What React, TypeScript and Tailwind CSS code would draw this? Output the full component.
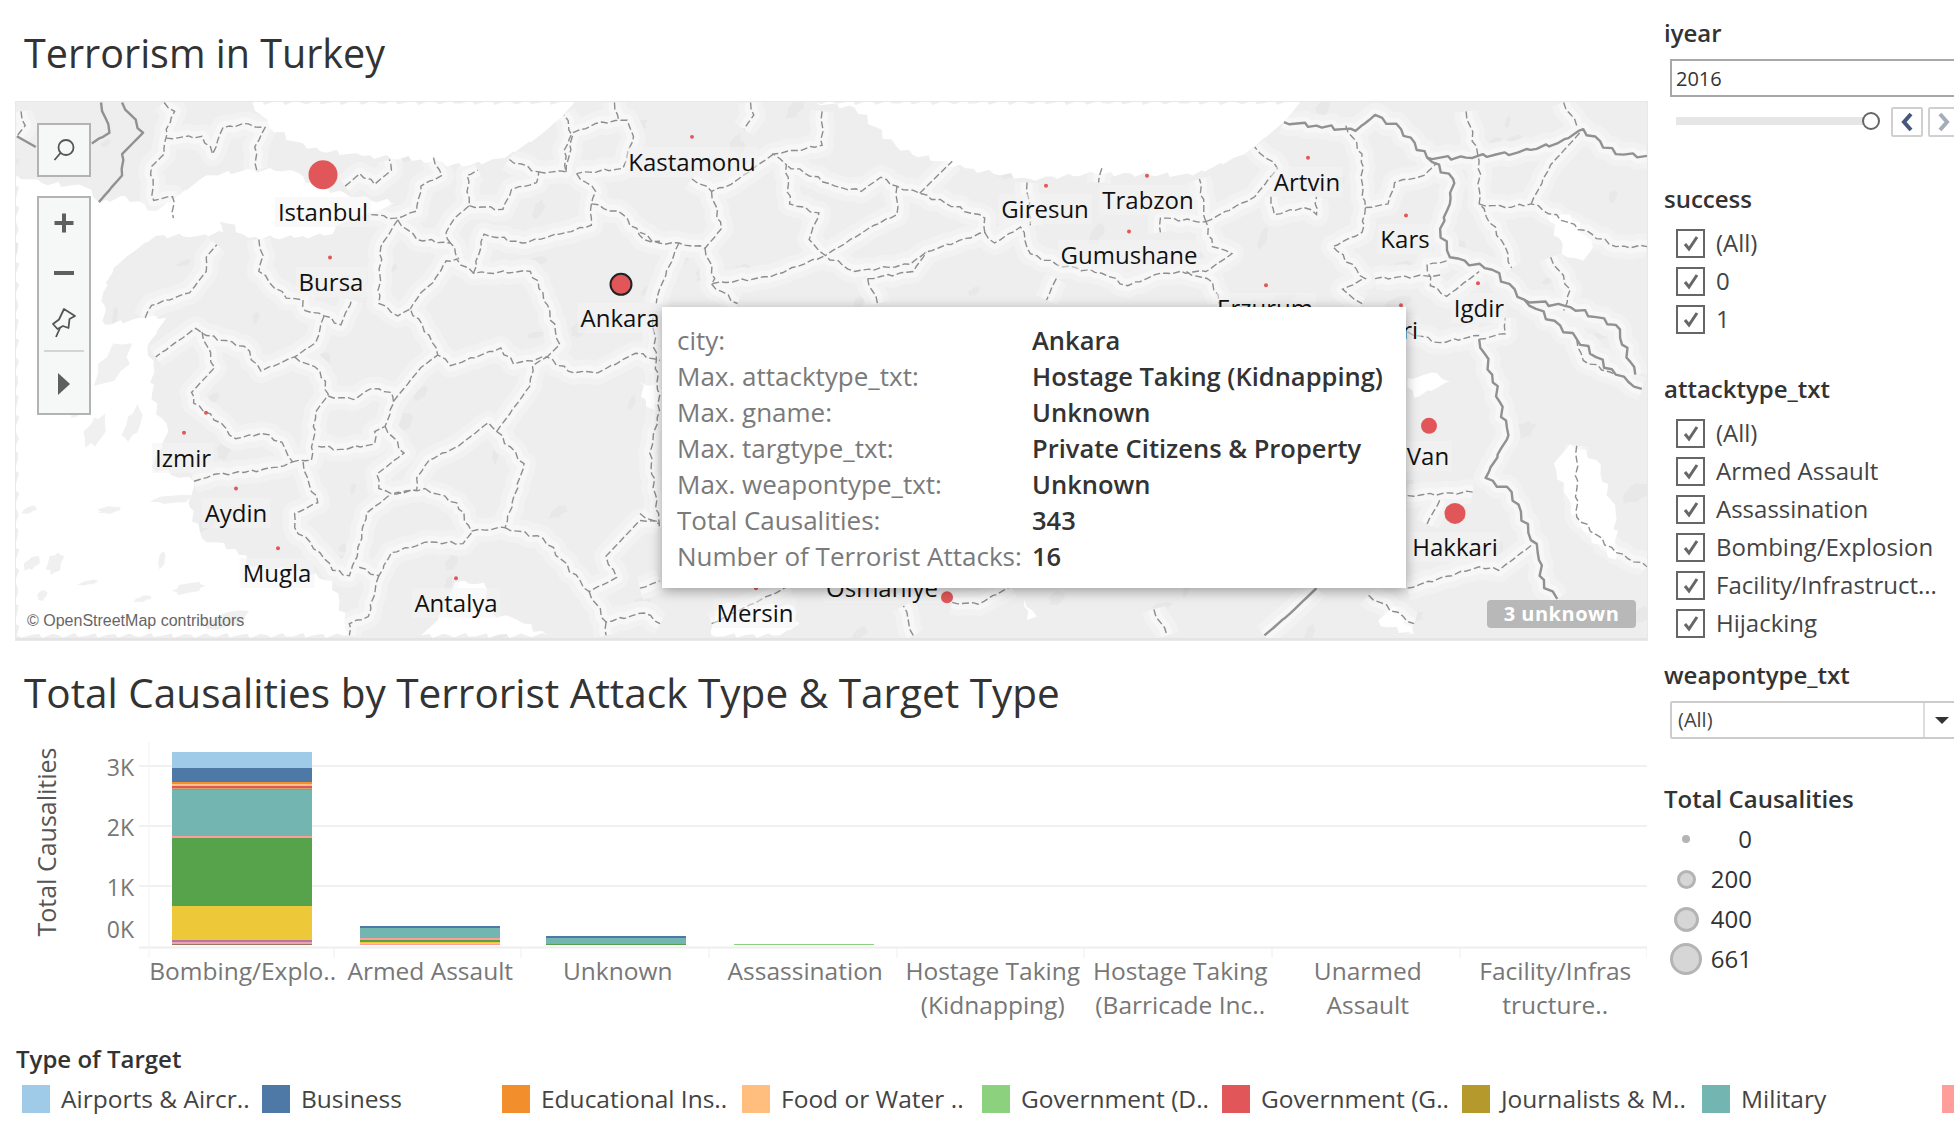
const font = "font-['Open_Sans',sans-serif]";

// map traces: coordinates from the two crops of the map
const westLines = [
  "390,35 415,60 395,110 390,180 360,215 365,310 410,300 412,360",
  "395,135 480,130 505,180 530,105 590,95 630,105 605,160 610,225",
  "1030,190 1050,240 1000,270 990,340 940,360 880,350",
  "820,270 855,235 890,265 930,225 925,195",
  "945,365 905,440 900,600 945,635 975,615 1020,690 1040,745 1070,775 1190,725 1220,770 1300,750 1330,715 1290,570 1260,510 1125,515 1085,475 1060,480 1030,540 1000,570 975,615",
  "945,365 990,420 1070,430 1090,475",
  "1070,430 1060,400 1080,360 1115,325 1110,240 1135,225",
  "1115,325 1195,335 1215,280 1275,260 1280,230 1210,195",
  "1280,230 1345,230 1340,170 1360,120 1430,90 1490,85 1505,130 1480,220 1370,235",
  "1345,230 1360,130 1340,70",
  "1460,35 1470,85",
  "1370,235 1415,285 1405,320 1480,350 1530,420 1568,425",
  "1405,320 1405,380 1330,405 1240,430 1150,405 1125,515",
  "615,420 625,465 615,510 680,585 720,590 725,620 770,635 810,660 835,590",
  "770,635 750,710 700,750 620,790 580,720 490,690 465,670 370,750",
  "480,680 510,780 455,850 460,880 500,910 560,980 620,965 670,990 695,1045 660,1060 580,1075 510,1080 460,1100",
  "700,750 760,790 780,855 750,905 745,980 740,1040 695,1045",
  "780,860 840,870 880,840 930,850 935,880 915,945 890,960 890,995 810,1010 750,1000",
  "935,875 1000,780 1040,745",
  "915,945 960,1020 895,1080 900,1120 930,1135 1010,1120",
  "720,1045 735,1110 755,1160 700,1190 700,1230 760,1300 790,1350 830,1365 850,1300 870,1190 930,1135",
  "1010,1120 1085,1160 1120,1240 1200,1230 1245,1050 1180,960 1160,935 1090,1000 1020,1040 990,1090 990,1125 930,1135",
  "1200,1230 1290,1260 1400,1410 1465,1370 1440,1310 1520,1210 1568,1215",
  "1120,1245 1100,1275 1020,1270 930,1300 900,1365 850,1340",
  "1180,960 1260,830 1265,775 1300,750 1350,790 1420,795 1510,740 1568,760",
  "1400,1410 1440,1495 1530,1470 1568,1500",
  "1440,1495 1440,1533",
  "900,1365 875,1480 830,1500 830,1533",
  "345,640 360,605 450,570 490,510 490,470 515,435",
  "50,60 60,100 40,130",
];

const eastLines = [
  "170,35 175,70 160,110",
  "280,60 280,155 240,170 205,180 225,210 230,320 275,345 260,420 285,465 330,510 415,490 440,455 530,400 530,360 430,290 395,270 370,245 340,285 300,270 225,210",
  "205,180 140,265 110,285 80,250",
  "110,285 125,390 100,445 60,430 30,430 0,400",
  "100,445 115,530 110,545 200,525 285,465",
  "60,430 30,560 25,600",
  "110,545 150,600",
  "350,530 365,600",
  "350,530 420,510 440,455",
  "395,270 395,350 360,380 285,465",
  "530,400 545,430 585,385 600,460 640,490 710,515 750,550 800,515 870,510 910,460 880,440 870,370 800,360 800,400",
  "870,370 945,300 980,220 945,160",
  "870,370 860,250",
  "430,290 480,200",
  "595,260 600,380",
  "710,220 705,260",
  "970,300 975,350 1020,330 1040,350 1040,300",
  "640,530 625,590",
  "840,510 880,540 890,600",
  "1085,100 1110,180 1110,300 1115,330 1110,400 1065,440 1115,530 1080,560 1110,600",
  "1115,330 1150,320 1160,260 1205,240 1225,205",
  "1230,520 1130,530",
  "1240,480 1210,490 1215,550 1240,580 1290,510",
  "1290,700 1330,685 1330,640",
  "1180,680 1230,710 1290,690",
  "1180,1140 1280,1130",
  "1210,1220 1230,1150",
  "1180,1400 1290,1340 1320,1350 1370,1280",
  "1270,60 1290,200 1290,320 1330,440 1340,500",
  "1290,320 1330,330 1370,320 1500,440 1548,440",
  "1370,320 1400,210 1450,110",
  "1420,35 1440,100",
  "1400,470 1430,560 1420,620",
  "1440,700 1450,760 1500,800",
  "1440,1000 1440,1200 1500,1300 1548,1340",
  "110,1500 200,1420 230,1395",
  "790,1460 810,1533",
  "1120,1420 1190,1500",
  "480,1440 520,1445 570,1395",
  "420,1533 405,1450",
  "0,1190 30,1220",
  "20,640 30,900 15,1020 30,1230",
  "0,1400 30,1380",
];

const countryLines = [
  "990,90 1040,100 1100,115 1130,70 1170,110 1210,190 1250,250 1245,320 1230,390 1245,470 1310,505 1360,590 1440,700 1500,800 1540,840",
  "1210,190 1270,190 1350,175 1410,150 1450,110 1500,180 1548,185",
  "1290,700 1310,800 1335,970 1300,1090 1340,1130 1380,1300 1390,1400 1410,1430",
  "1360,590 1430,610 1500,660 1530,800",
  "1040,1400 1000,1470 960,1533",
];

// subdivide a trace and shake it a little so borders don't look ruled
function wiggle(points: string, sx: number, sy: number, amp = 1.4) {
  const pts = points.split(" ").map((p) => p.split(",").map(Number));
  let d = `M${pts[0][0]},${pts[0][1]}`;
  for (let i = 1; i < pts.length; i++) {
    const [x0, y0] = pts[i - 1];
    const [x1, y1] = pts[i];
    const len = Math.hypot((x1 - x0) * sx, (y1 - y0) * sy);
    const n = Math.max(1, Math.round(len / 7));
    for (let k = 1; k <= n; k++) {
      const t = k / n;
      const off = k === n ? 0 : Math.sin(k * 2.3 + i * 1.7) * amp;
      d += `L${(x0 + (x1 - x0) * t + off / sx).toFixed(1)},${(y0 + (y1 - y0) * t - off / sy).toFixed(1)}`;
    }
  }
  return d;
}

// lumpy outline for islands and the darker land patches
function blob(cx: number, cy: number, rx: number, ry: number, seed: number) {
  let d = "";
  for (let i = 0; i < 12; i++) {
    const a = (i / 12) * Math.PI * 2;
    const r = 0.72 + 0.28 * Math.sin(i * 2.1 + seed) * Math.cos(i * 0.9 + seed * 2) + 0.12;
    d += `${i ? "L" : "M"}${(cx + Math.cos(a + 0.5) * rx * r).toFixed(1)},${(cy + Math.sin(a) * ry * r).toFixed(1)}`;
  }
  return d + "Z";
}

const westSea = [
  "600,35 640,105 730,165 860,185 1000,195 1100,215 1200,190 1280,130 1340,70 1365,35 600,35",
  "40,240 100,262 200,272 235,315 300,300 370,340 420,300 490,240 600,225 690,225 760,275 820,290 880,310 950,315 880,345 800,380 790,405 700,415 590,415 540,375 510,350 530,400 470,410 370,410 310,460 270,500 245,570 250,660 345,640 395,640 350,720 365,760 360,870 400,960 360,1060 460,1100 450,1170 480,1260 560,1290 600,1340 700,1350 790,1380 830,1533 40,1533 40,240",
  "1000,1533 1040,1490 1080,1385 1150,1385 1170,1470 1230,1490 1300,1533 1000,1533",
  "1530,860 1568,815 1568,905 1530,860",
];

const westIslands = [
  [270, 770, 50, 65], [315, 940, 24, 55], [225, 960, 28, 55], [130, 1330, 22, 38], [260, 1180, 35, 12],
  [450, 1400, 50, 18], [340, 1430, 26, 10], [210, 1385, 26, 9], [75, 1330, 20, 25], [410, 1150, 55, 16],
  [100, 1420, 14, 18], [385, 1320, 12, 26], [70, 1180, 22, 12], [540, 1490, 60, 30], [180, 910, 12, 14],
];

const eastSea = [
  "270,35 330,50 400,170 500,220 600,250 700,235 850,240 930,180 990,90 1015,35 270,35",
  "1180,810 1225,795 1245,820 1190,865 1180,810",
  "1395,350 1430,350 1465,440 1450,480 1425,470 1395,350",
  "1405,1050 1430,995 1470,1040 1500,1190 1500,1320 1450,1240 1420,1130 1405,1050",
  "110,1533 115,1480 125,1445 235,1450 245,1500 215,1533 110,1533",
  "590,1430 610,1480 595,1490 590,1430",
  "0,820 25,830 25,900 10,890 0,820",
  "1135,1490 1160,1450 1175,1500 1190,1530 1150,1510 1135,1490",
];

// scattered land texture, fixed from the index so every run draws the same
const texture = Array.from({ length: 130 }, (_, i) => {
  const x = 16 + ((i * 487.3 + Math.sin(i) * 90) % 1631);
  const y = 102 + ((i * 211.7 + Math.cos(i * 1.3) * 60) % 538);
  const rx = 4 + ((i * 7) % 11);
  const ry = 4 + ((i * 5) % 9);
  return blob(x, y, rx, ry, i);
});

function MapDrawing() {
  const west = "translate(0,90) scale(0.4209,0.3571)";
  const east = "translate(640,90) scale(0.6505,0.3571)";
  const wPaths = westLines.map((l) => wiggle(l, 0.4209, 0.3571));
  const ePaths = eastLines.map((l) => wiggle(l, 0.6505, 0.3571));
  const cPaths = countryLines.map((l) => wiggle(l, 0.6505, 0.3571, 2));
  const halo = (
    <>
      <g transform={west}>{wPaths.map((d, i) => <path key={i} d={d} vectorEffect="non-scaling-stroke" />)}</g>
      <g transform={east}>{ePaths.map((d, i) => <path key={i} d={d} vectorEffect="non-scaling-stroke" />)}</g>
      <g transform={east}>{cPaths.map((d, i) => <path key={i} d={d} vectorEffect="non-scaling-stroke" />)}</g>
    </>
  );
  return (
    <svg viewBox="16 102 1631 538" className="absolute inset-0 h-full w-full" preserveAspectRatio="none">
      <rect x="16" y="102" width="1631" height="538" fill="#eeeeee" />
      <g fill="#e8e8e8">
        {texture.map((d, i) => <path key={i} d={d} />)}
      </g>
      <g fill="none" stroke="#f2f2f2" strokeWidth="24" strokeLinejoin="round">{halo}</g>
      <g fill="none" stroke="#f7f7f7" strokeWidth="12" strokeLinejoin="round">{halo}</g>
      <g transform={west} fill="#ffffff">
        {westSea.map((p, i) => <path key={i} d={wiggle(p, 0.4209, 0.3571, 2.5)} />)}
      </g>
      <g transform={west} fill="#f0f0f0">
        {westIslands.map(([cx, cy, rx, ry], i) => <path key={i} d={blob(cx, cy, rx, ry, i + 3)} />)}
      </g>
      <g transform={east} fill="#ffffff">
        {eastSea.map((p, i) => <path key={i} d={wiggle(p, 0.6505, 0.3571, 2.5)} />)}
      </g>
      <g fill="none" stroke="#8d8d8d" strokeWidth="1.4" strokeDasharray="7 3">
        <g transform={west}>{wPaths.map((d, i) => <path key={i} d={d} vectorEffect="non-scaling-stroke" />)}</g>
        <g transform={east}>{ePaths.map((d, i) => <path key={i} d={d} vectorEffect="non-scaling-stroke" />)}</g>
      </g>
      <g fill="none" stroke="#919191" strokeWidth="2.4" strokeLinejoin="round">
        <g transform={west}>
          <path d={wiggle("240,35 260,120 218,150", 0.42, 0.357)} vectorEffect="non-scaling-stroke" />
          <path d={wiggle("290,35 340,120 290,180 290,240 235,315", 0.42, 0.357)} vectorEffect="non-scaling-stroke" />
          <path d="M40,130 L85,160" vectorEffect="non-scaling-stroke" />
        </g>
        <g transform={east}>{cPaths.map((d, i) => <path key={i} d={d} vectorEffect="non-scaling-stroke" />)}</g>
      </g>
      {smallDots.map(([cx, cy], i) => <circle key={i} cx={cx} cy={cy} r="2" fill="#e15759" />)}
      <circle cx="323" cy="175" r="14.5" fill="#e15759" />
      <circle cx="621" cy="285" r="10.5" fill="#e15759" stroke="#222222" strokeWidth="2" />
      <circle cx="1429" cy="427" r="8" fill="#e15759" />
      <circle cx="1455" cy="515" r="10.5" fill="#e15759" />
      <circle cx="947" cy="599" r="6" fill="#e15759" />
    </svg>
  );
}

const smallDots = [
  [692, 137], [330, 258], [184, 434], [206, 414], [236, 490], [278, 550], [456, 580], [756, 590], [1046, 186],
  [1147, 176], [1308, 158], [1406, 216], [1129, 232], [1266, 286], [1478, 284], [1401, 306],
];

const cities: [string, number, number][] = [
  ["Kastamonu", 692, 162], ["Istanbul", 323, 212], ["Bursa", 331, 282], ["Ankara", 620, 318], ["Izmir", 183, 458],
  ["Aydin", 236, 513], ["Mugla", 277, 573], ["Antalya", 456, 603], ["Mersin", 755, 613], ["Osmaniye", 882, 588],
  ["Giresun", 1045, 209], ["Trabzon", 1148, 200], ["Artvin", 1307, 182], ["Kars", 1405, 239], ["Gumushane", 1129, 255],
  ["Igdir", 1479, 308], ["Erzurum", 1265, 308], ["Agri", 1396, 330], ["Van", 1428, 456], ["Hakkari", 1455, 547],
];

const tooltipRows = [
  ["city:", "Ankara"],
  ["Max. attacktype_txt:", "Hostage Taking (Kidnapping)"],
  ["Max. gname:", "Unknown"],
  ["Max. targtype_txt:", "Private Citizens & Property"],
  ["Max. weapontype_txt:", "Unknown"],
  ["Total Causalities:", "343"],
  ["Number of Terrorist Attacks:", "16"],
];

function MapControls() {
  return (
    <div className="absolute left-[21px] top-[21px] flex flex-col gap-[19px] text-[#666666]">
      <div className="flex h-[54px] w-[54px] items-center justify-center border-2 border-[#b3b3b3] bg-[#f6f7f7]">
        <svg width="26" height="26" viewBox="0 0 26 26" fill="none" stroke="#555555" strokeWidth="1.8">
          <circle cx="15" cy="10.5" r="7.5" />
          <path d="M9.5 16 L3.5 23" />
        </svg>
      </div>
      <div className="flex h-[219px] w-[54px] flex-col items-center border-2 border-[#b3b3b3] bg-[#f6f7f7]">
        <div className="flex h-[50px] items-center justify-center">
          <svg width="22" height="22" viewBox="0 0 22 22" fill="#5f5f5f"><path d="M9 1.5h4V9h7.5v4H13v7.5H9V13H1.500V9H9z" /></svg>
        </div>
        <div className="flex h-[50px] items-center justify-center">
          <div className="h-[4px] w-[20px] bg-[#5f5f5f]" />
        </div>
        <div className="flex h-[44px] items-center justify-center pt-[6px]">
          <svg width="26" height="32" viewBox="0 0 26 32" fill="none" stroke="#555555" strokeWidth="1.8" strokeLinejoin="round">
            <path d="M13 2 L24 9 L18.500 12 L17.500 21 L12 19 L6.500 22 L2 17 L8 12.500 Z" />
            <path d="M9 21 L5 30" />
          </svg>
        </div>
        <div className="mt-[8px] h-[2px] w-[40px] bg-[#d4d4d4]" />
        <div className="flex flex-1 items-center justify-center pt-[2px]">
          <svg width="16" height="24" viewBox="0 0 16 24" fill="#5f5f5f"><path d="M2 1 L14 12 L2 23 Z" /></svg>
        </div>
      </div>
    </div>
  );
}

function MapPanel() {
  return (
    <div className="relative h-[538px] w-[1631px] overflow-hidden border-b-2 border-[#e4e4e4] outline outline-1 outline-[#e8e8e8]">
      <MapDrawing />
      {cities.map(([name, x, y]) => (
        <div
          key={name}
          className={`absolute -translate-x-1/2 -translate-y-1/2 whitespace-nowrap bg-[#f4f4f4]/50 px-[3px] text-[24px] leading-[30px] text-[#111111] ${font}`}
          style={{ left: x - 16, top: y - 102 }}
        >
          {name}
        </div>
      ))}
      <MapControls />
      <div className="absolute left-[11px] top-[509px] font-['Liberation_Sans',sans-serif] text-[16px] leading-5 text-[#666666]">
        © OpenStreetMap contributors
      </div>
      <div className={`absolute left-[1471px] top-[498px] flex h-[28px] w-[149px] items-center justify-center rounded-[4px] bg-[#b8b8b8] text-[20px] font-bold tracking-[0.5px] text-white ${font}`}>
        3 unknown
      </div>
      <div className="absolute left-[646px] top-[205px] grid h-[281px] w-[744px] grid-cols-[355px_1fr] content-center bg-white pl-[15px] shadow-[0_3px_12px_rgba(0,0,0,0.35)]">
        {tooltipRows.map(([label, value]) => (
          <div key={label} className="contents">
            <div className="text-[26px] leading-[36px] whitespace-nowrap text-[#7a7a7a]">{label}</div>
            <div className="text-[25.500px] font-semibold leading-[36px] whitespace-nowrap text-[#333333]">{value}</div>
          </div>
        ))}
      </div>
    </div>
  );
}

// stacked bars, [top, bottom, colour] in page y
const bars: { x: number; parts: [number, number, string][] }[] = [
  {
    x: 172,
    parts: [
      [752, 768, "#a0cbe8"], [768, 782, "#4e79a7"], [782, 784.500, "#f28e2b"], [784.500, 786, "#ffbe7d"], [786, 788.500, "#e15759"],
      [788.500, 790, "#b6992d"], [790, 836, "#73b5b0"], [836, 838, "#ff9d9a"], [838, 906, "#57a34c"], [906, 940, "#edc93a"],
      [940, 942, "#b07aa1"], [942, 944, "#f1a0b5"], [944, 945, "#9c755f"],
    ],
  },
  {
    x: 360,
    parts: [
      [926, 928, "#4e79a7"], [928, 938, "#73b5b0"], [938, 940, "#ff9d9a"], [940, 942, "#57a34c"], [942, 943.500, "#edc93a"], [943.500, 945, "#ff9d9a"],
    ],
  },
  { x: 546, parts: [[936, 938, "#4e79a7"], [938, 944, "#73b5b0"], [944, 945, "#57a34c"]] },
  { x: 734, parts: [[944, 945, "#8cd17d"]] },
];

const xLabels = [
  ["Bombing/Explo.."], ["Armed Assault"], ["Unknown"], ["Assassination"], ["Hostage Taking", "(Kidnapping)"],
  ["Hostage Taking", "(Barricade Inc.."], ["Unarmed", "Assault"], ["Facility/Infras", "tructure.."],
];

function BarChart() {
  return (
    <div>
      <svg viewBox="16 740 1631 218" className="block h-[218px] w-[1631px]">
        {[766, 826, 886].map((y) => (
          <line key={y} x1="139" x2="1647" y1={y} y2={y} stroke="#f1f1f1" strokeWidth="2" />
        ))}
        <line x1="139" x2="1647" y1="947.500" y2="947.500" stroke="#eeeeee" strokeWidth="2" />
        <line x1="149" x2="149" y1="742" y2="958" stroke="#f3f3f3" strokeWidth="1" />
        {[334, 521, 709, 897, 1084, 1272, 1460, 1647].map((x) => (
          <line key={x} x1={x} x2={x} y1="948" y2="958" stroke="#eeeeee" strokeWidth="1" />
        ))}
        {bars.map((b) =>
          b.parts.map(([top, bottom, color]) => (
            <rect key={`${b.x}-${top}`} x={b.x} y={top} width="140" height={bottom - top} fill={color} />
          )),
        )}
        <g fontSize="23" fill="#777777" textAnchor="end" className={font}>
          <text x="134" y="776">3K</text>
          <text x="134" y="836">2K</text>
          <text x="134" y="896">1K</text>
          <text x="134" y="938">0K</text>
        </g>
        <text transform="translate(56,842) rotate(-90)" textAnchor="middle" fontSize="25" fill="#555555" className={font}>
          Total Causalities
        </text>
      </svg>
      <div className="-mt-[4px] ml-[133px] grid w-[1500px] grid-cols-8">
        {xLabels.map((lines) => (
          <div key={lines[0]} className="text-center text-[24.500px] leading-[34px] whitespace-nowrap text-[#777777]">
            {lines.map((l) => <div key={l}>{l}</div>)}
          </div>
        ))}
      </div>
    </div>
  );
}

const targets = [
  ["Airports & Aircr..", "#a0cbe8"], ["Business", "#4e79a7"], ["Educational Ins..", "#f28e2b"], ["Food or Water ..", "#ffbe7d"],
  ["Government (D..", "#8cd17d"], ["Government (G..", "#e15759"], ["Journalists & M..", "#b6992d"], ["Military", "#73b5b0"], ["", "#ff9d9a"],
];

function Legend() {
  return (
    <div className="mt-[22px]">
      <div className="text-[24px] font-semibold leading-[30px] text-[#333333]">Type of Target</div>
      <div className="ml-[6px] mt-[11px] flex">
        {targets.map(([name, color]) => (
          <div key={color} className="flex w-[240px] shrink-0 items-center gap-[11px]">
            <div className="h-[28px] w-[28px] shrink-0" style={{ backgroundColor: color }} />
            <div className="text-[24.500px] leading-[28px] whitespace-nowrap text-[#444444]">{name}</div>
          </div>
        ))}
      </div>
    </div>
  );
}

function Check({ label }: { label: string }) {
  return (
    <div className="flex h-[38px] items-center gap-[11px] whitespace-nowrap">
      <div className="flex h-[29px] w-[29px] shrink-0 items-center justify-center border-2 border-[#666666] bg-white">
        <svg width="18" height="18" viewBox="0 0 18 18" fill="none" stroke="#666666" strokeWidth="3"><path d="M3 10 L7 15 L15 3" /></svg>
      </div>
      <div className="text-[24px] leading-[30px] text-[#444444]">{label}</div>
    </div>
  );
}

const sizes = [
  ["0", "h-[8px] w-[8px] bg-[#b4b4b4]"],
  ["200", "h-[19px] w-[19px] border-[3px] border-[#b4b4b4] bg-[#d6d6d6]"],
  ["400", "h-[25px] w-[25px] border-[3px] border-[#b4b4b4] bg-[#d6d6d6]"],
  ["661", "h-[32px] w-[32px] border-[3px] border-[#b4b4b4] bg-[#d6d6d6]"],
];

function Sidebar() {
  const heading = "text-[24px] font-semibold leading-[30px] whitespace-nowrap text-[#333333]";
  return (
    <div className="ml-[17px] w-[290px] shrink-0 overflow-hidden pt-[18px]">
      <div className={heading}>iyear</div>
      <div className="ml-[6px] mt-[11px] flex h-[38px] w-[320px] items-center border-2 border-[#a8a8a8] pl-[4px] pt-[1px] text-[20px] text-[#333333]">2016</div>
      <div className="ml-[12px] mt-[10px] flex w-[320px] items-center">
        <div className="relative mb-[3px] h-[8px] w-[200px] bg-[#e6e6e6]">
          <div className="absolute -right-[4px] -top-[5px] h-[18px] w-[18px] rounded-full border-2 border-[#666666] bg-white" />
        </div>
        <div className="ml-[15px] flex h-[30px] w-[32px] items-center justify-center rounded-[2px] border-2 border-[#d0d0d0]">
          <svg width="14" height="20" viewBox="0 0 14 20" fill="none" stroke="#45597a" strokeWidth="4"><path d="M11 2 L4 10 L11 18" /></svg>
        </div>
        <div className="ml-[5px] flex h-[30px] w-[32px] items-center justify-center rounded-[2px] border-2 border-[#d0d0d0]">
          <svg width="14" height="20" viewBox="0 0 14 20" fill="none" stroke="#a3adbb" strokeWidth="4"><path d="M3 2 L10 10 L3 18" /></svg>
        </div>
      </div>
      <div className={`mt-[47px] ${heading}`}>success</div>
      <div className="ml-[12px] mt-[10px]">
        {["(All)", "0", "1"].map((l) => <Check key={l} label={l} />)}
      </div>
      <div className={`mt-[36px] ${heading}`}>attacktype_txt</div>
      <div className="ml-[12px] mt-[10px]">
        {["(All)", "Armed Assault", "Assassination", "Bombing/Explosion", "Facility/Infrastruct...", "Hijacking"].map((l) => <Check key={l} label={l} />)}
      </div>
      <div className={`mt-[18px] ${heading}`}>weapontype_txt</div>
      <div className="ml-[6px] mt-[11px] flex h-[38px] w-[320px] items-center rounded-[2px] border-2 border-[#cccccc]">
        <div className="w-[253px] border-r-2 border-[#dddddd] pl-[6px] text-[20px] leading-[34px] text-[#444444]">(All)</div>
        <div className="ml-[10px] h-0 w-0 border-x-[7px] border-t-[7px] border-x-transparent border-t-[#333333]" />
      </div>
      <div className={`mt-[45px] ${heading}`}>Total Causalities</div>
      <div className="mt-[5px] w-[88px]">
        {sizes.map(([value, cls]) => (
          <div key={value} className="flex h-[40px] items-center justify-between">
            <div className="flex w-[44px] justify-center">
              <div className={`rounded-full ${cls}`} />
            </div>
            <div className="text-[24px] leading-[30px] text-[#333333]">{value}</div>
          </div>
        ))}
      </div>
    </div>
  );
}

export default function App() {
  return (
    <div className={`flex h-[1130px] w-[1954px] overflow-hidden bg-white pl-[16px] ${font}`}>
      <div className="w-[1631px] shrink-0">
        <div className="flex h-[102px] items-center pt-[5px] pl-[8px] text-[39.500px] text-[#333333]">Terrorism in Turkey</div>
        <MapPanel />
        <div className="flex h-[100px] items-center pt-[6px] pl-[8px] text-[40.500px] whitespace-nowrap text-[#333333]">
          Total Causalities by Terrorist Attack Type &amp; Target Type
        </div>
        <BarChart />
        <Legend />
      </div>
      <Sidebar />
    </div>
  );
}
